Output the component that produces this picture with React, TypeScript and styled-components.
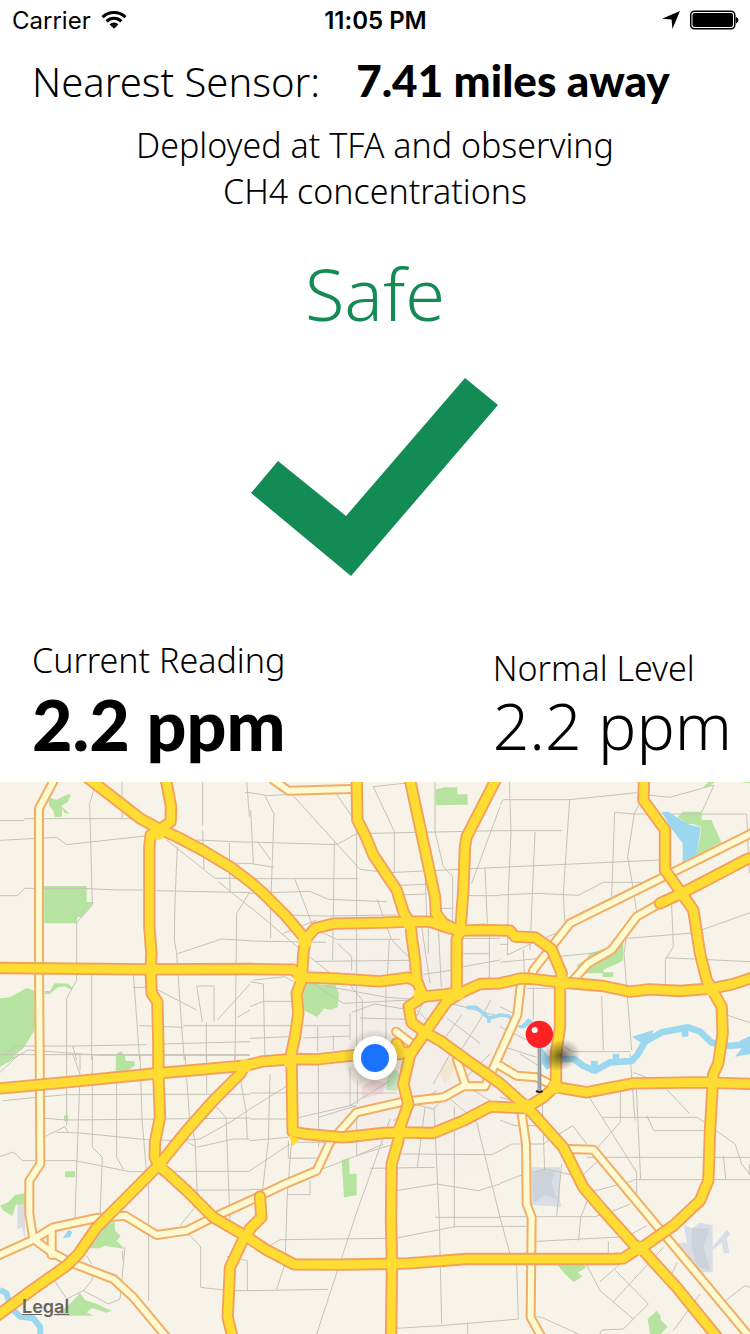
import React from "react";
import styled, { createGlobalStyle } from "styled-components";

const GlobalStyle = createGlobalStyle`
  * { box-sizing: border-box; }
  body { margin: 0; background: #fff; }
`;

const GREEN = "#138b55";

const Screen = styled.main`
  display: flex;
  flex-direction: column;
  min-height: 100vh;
  background: #fff;
  color: #000;
  font-family: "Noto Sans", "Open Sans", sans-serif;
  font-weight: 300;
  font-variant-ligatures: none;
`;

const StatusBar = styled.header`
  display: grid;
  grid-template-columns: 1fr auto 1fr;
  align-items: center;
  height: 40px;
  padding: 0 11px 0 12px;
  font-family: Inter, sans-serif;
  font-size: 24px;
  font-weight: 400;
`;

const StatusGroup = styled.div<{ $end?: boolean }>`
  display: flex;
  align-items: center;
  justify-content: ${(p) => (p.$end ? "flex-end" : "flex-start")};
  gap: 10px;
`;

const Clock = styled.time`
  font-weight: 600;
`;

const SensorRow = styled.div`
  display: flex;
  align-items: baseline;
  gap: 36px;
  padding: 14px 32px 0;
  line-height: 52px;
`;

const SensorLabel = styled.h1`
  margin: 0;
  font-size: 40px;
  font-weight: 300;
`;

const SensorDistance = styled.strong`
  font-family: Lato, sans-serif;
  font-size: 44px;
  font-weight: 900;
`;

const Description = styled.p`
  align-self: center;
  width: 520px;
  max-width: 100%;
  margin: 14px 0 0;
  text-align: center;
  font-size: 34px;
  line-height: 46px;
`;

const Verdict = styled.section`
  display: flex;
  flex-direction: column;
  align-items: center;
  gap: 40px;
  padding-top: 34px;
  color: ${GREEN};
`;

const VerdictText = styled.h2`
  margin: 0;
  font-size: 72px;
  line-height: 90px;
  font-weight: 300;
`;

const Readings = styled.section`
  display: flex;
  justify-content: space-between;
  padding: 62px 18px 0 32px;
`;

const Reading = styled.div<{ $lowered?: boolean }>`
  display: flex;
  flex-direction: column;
  padding-top: ${(p) => (p.$lowered ? "8px" : "0")};
`;

const ReadingLabel = styled.span`
  font-size: 34px;
  line-height: 44px;
`;

const ReadingValue = styled.span<{ $heavy?: boolean }>`
  font-family: ${(p) => (p.$heavy ? "Lato, sans-serif" : "inherit")};
  font-size: ${(p) => (p.$heavy ? "70px" : "64px")};
  line-height: ${(p) => (p.$heavy ? "84px" : "72px")};
  font-weight: ${(p) => (p.$heavy ? 900 : 300)};
`;

const MapPanel = styled.section`
  position: relative;
  margin-top: 16px;
  background: #f7f3e9;
`;

const MapDrawing = styled.svg`
  display: block;
  width: 100%;
  height: auto;
`;

const LegalLink = styled.a`
  position: absolute;
  left: 22px;
  bottom: 16px;
  font-family: Inter, sans-serif;
  font-size: 18px;
  line-height: 22px;
  font-weight: 600;
  color: #66655f;
`;

const highways = [
  "265,-5 330,45 420,115 480,148 530,170 610,212 690,260 750,305 790,340 855,405 917,478",
  "498,0 513,80 512,125 480,148",
  "480,148 452,165 448,200 448,440 454,520 452,570 455,640 472,665 475,790 475,882 480,1012 465,1087 464,1132 475,1157 505,1182 560,1232 640,1312 735,1367 800,1410 882,1453 1020,1454 1150,1452 1225,1450 1400,1437 1500,1437 1840,1437 1870,1435 1920,1402",
  "-10,564 440,568 750,567 880,569 905,592 1000,595 1140,604 1225,593 1250,605",
  "-10,926 60,920 250,902 450,882 735,857 790,844 880,837 950,838 1080,824 1200,822",
  "735,857 720,882 640,962 560,1052 475,1157 380,1252 290,1342 235,1422 200,1457 100,1527 -10,1608",
  "917,478 910,520 905,600 890,640 895,700 885,770 872,830 875,865 878,1055 915,1062 1030,1072 1150,1059 1200,1057 1300,1059 1390,1022 1470,980 1570,984",
  "917,478 945,445 1000,431 1150,428 1220,425 1290,425 1350,445 1380,452 1450,450 1530,452 1545,470 1605,472 1655,508 1685,580 1680,610 1680,740 1668,822 1668,917 1630,952 1590,977",
  "1070,0 1072,120 1095,165 1120,225 1190,330 1212,400 1232,430 1235,470 1245,540 1250,600 1270,650",
  "1230,0 1305,350 1308,400 1330,430 1375,452",
  "1487,0 1400,170 1395,200 1390,330 1382,440 1370,480 1370,640",
  "1270,650 1335,643 1390,635 1440,612 1500,610 1565,595 1600,597 1690,608 1810,618 1890,635 1950,628 2040,633 2140,625 2200,612 2260,592",
  "1380,640 1340,665 1275,758 1230,825 1210,912 1225,972 1200,1042 1195,1082 1175,1152 1173,1322 1176,1450 1173,1680",
  "1270,650 1226,680 1235,728 1275,757 1325,785 1400,840 1500,910 1570,972 1600,1002 1690,1102 1750,1222 1810,1292 1900,1392 1930,1412 2030,1522 2160,1682",
  "1932,0 1930,60 1995,150 1995,270 2045,340 2080,390 2100,520 2120,600 2137,630 2165,680 2168,760 2155,850 2140,882 2130,1052 2125,1202 2100,1262 2020,1337 1930,1400",
  "1980,370 2045,340 2240,238 2260,232",
  "1660,920 1760,937 1900,910 2100,907 2260,912",
  "735,1367 690,1462 683,1612 700,1682",
  "745,1357 750,1346 784,1312 780,1250",
  "1190,790 1205,820 1235,815",
];

const junctions = "475,160 480,1157 455,568 475,882 915,485 900,590 1228,430 1378,452 1375,640 1275,757 1260,645 1200,1055 1176,1452 1690,607 2135,628 1665,920 1580,980 1918,1405 2045,340 2137,907 870,845 735,857";

const arterials = [
  "165,-5 117,85 117,560 119,822 121,1152 88,1202 88,1302 100,1377",
  "-10,1429 100,1379 160,1342 290,1314 375,1307 470,1365 560,1352 640,1312 750,1262 860,1210 950,1172 990,1087 1070,997 1200,967 1330,952 1390,919 1455,919 1500,820 1552,705 1564,600",
  "1595,590 1600,570 1710,430 2260,157",
  "100,1377 155,1417 210,1447 340,1497 400,1552 500,1672",
  "155,1350 155,1425",
  "820,0 865,32 1055,27",
  "1720,600 1765,550 1835,510 1910,410 1980,370",
  "1370,835 1397,917",
  "1188,755 1240,795",
  "1500,857 1550,887 1610,892 1650,912",
  "1565,1000 1578,1092 1580,1272 1595,1312 1592,1612 1625,1672",
  "1706,1107 1780,1109 2250,1672",
];

interface Tile {
  x: number;
  y: number;
  streets: string;
  parks: string;
}

const tiles: Tile[] = [
  {
    x: 0,
    y: 0,
    streets:
      "M0 122H70L75 116H430 M0 181L170 172L200 194L435 168 M285 20L269 70L277 375L230 428V600L200 655V840 M366 0V115 M608 0V137 M608 152L612 268 M750 187L590 180 M500 180L645 295H750 M532 200L525 360L523 480L530 520L545 740L553 840 M530 522L665 477L750 482 M0 347H52L75 325H240L355 330H430 M470 332L750 338 M655 305L750 382 M688 188L690 335 M690 250H750 M750 335L710 400L705 840 M275 580V840 M400 580L419 840 M400 622H440 M470 628L590 690 M607 725L590 618H642V725 M652 720L750 612 M712 712L750 690 M417 737L550 742 M550 737H750 M619 727V840 M0 835L50 798H220L440 794 M490 792L560 790L750 785 M30 840L85 810L300 826H750 M218 797L230 840 M740 0L748 110 M735 38H750",
    parks:
      "M133 318H260V366H282L245 411H232V430H133Z M0 655L30 652L80 624L104 632V750L70 805L25 840H0Z M145 50L168 60L205 42L212 45L204 65L183 78L210 102L193 98L188 85L185 110L165 112L160 93L147 75Z M134 633H150L164 610L205 611L218 624L214 630L194 619L173 622L150 642H134Z M352 820L362 814L374 825V840H348Z",
  },
  {
    x: 750,
    y: 0,
    streets:
      "M0 38L55 47L100 44L310 30 M45 48L72 102L62 380V475 M130 48L330 268L415 278L750 262 M260 43L320 130V840 M370 20L433 155V280 M370 20L480 8 M555 0V155L580 260L608 290V425 M360 160L750 152 M0 186L260 194L318 162 M253 185L248 540 M0 296H325 M0 340L180 334L235 358L410 365 M22 184L62 240 M0 250L72 262 M135 298L188 437 M0 380L165 520L280 610 M85 404L215 408L440 405 M100 460L200 420 M0 483L228 487 M200 450L260 478H450 M0 605L40 612L45 840 M0 680L40 664H130 M10 600L105 590L130 605 M262 490L305 530V570 M197 544L480 541 M382 358L410 440L425 480L480 535 M418 480L412 590 M450 316L525 313 M450 345L530 342 M526 285L530 420 M750 80L665 310 M705 263L712 430 M635 347H750 M572 385H608 M535 440V520 M515 440L540 610 M565 440L574 620 M570 455H610 M640 475H750 M640 521H718 M718 440V600 M520 583L610 570 M640 560L750 540 M188 610L280 670L480 660 M300 615L337 660V840 M225 618L410 652L495 658 M408 612V840 M300 700V780 M305 697L375 672L480 690 M330 714L470 718 M0 737H130 M160 737H300 M0 775L120 770 M160 774L300 768 M203 740V815 M250 766V810 M560 660L640 680L750 710 M592 715L690 790 M635 705L580 780 M500 690L530 720 M520 665L500 710 M722 660L690 720L620 830 M2 90L10 250",
    parks:
      "M557 28L585 22H622V43H653V74L557 76Z M160 612L195 608L215 614L255 612L267 640L263 682L240 690L222 685L202 711L160 690Z",
  },
  {
    x: 1500,
    y: 0,
    streets:
      "M0 75L10 59H210L410 38 M445 45L510 52L642 15L605 97 M28 0L33 155L25 340L22 525 M0 152H185 M105 155L90 510 M209 58L190 340L194 425 M0 262L480 240 M0 345L110 340L235 346L310 307H430 M335 350L344 97L400 102H740L748 280 M425 60L403 100L383 230L402 340L410 400 M22 525L95 490L205 445 M0 493H25 M0 547L290 518 M380 475L605 457 M605 450L750 398 M515 375L520 500L496 540V615 M496 533L750 545 M378 475L372 520L382 650L395 810 M305 648L310 810 M80 625H160 M100 620V720 M70 510L74 600 M0 680L60 710 M0 740L80 780 M680 705L750 728 M180 790L215 815H390 M20 803L110 832",
    parks:
      "M532 112L548 95H605V142L580 132L560 131L548 121Z M606 120H634L664 187L590 226L600 170Z M232 554L258 538L270 520L300 510L370 490V540L355 550L330 560L310 570V577H340V591H308V580H250L243 568H232Z M610 22L625 6H645L625 20Z M720 6H750V10Z",
  },
  {
    x: 0,
    y: 822,
    streets:
      "M0 55L58 0 M10 140L130 128L200 122L440 121H750 M200 0V215 M218 0L240 60L235 200L225 490 M240 0V50 M277 0V280L307 310L300 490 M350 75V310L370 345 M420 0L426 195L440 360 M135 193L200 198L750 192 M137 247L195 218L205 235 M170 235L240 237L440 257L540 260L600 255L690 205L750 165 M0 308L40 294L68 320H225L390 353H440 M510 352H750 M446 380V740 M555 0L568 185L585 260L593 450L540 515L602 578V700L690 710H750 M620 0V120 M640 150L678 190L690 500 M555 260L590 280L700 255L750 255 M560 408L750 408 M704 0V30 M720 70L738 170L742 255 M375 580L360 735L325 750L250 710L200 735L165 682 M250 710L275 680L285 640 M260 605L275 630 M368 590V620 M680 607L742 620V710 M0 2H750",
    parks:
      "M0 0H50L30 22L0 38Z M348 0H372L378 20L404 22V35L375 55H347Z M0 455L25 444L45 423L75 418V452H47L38 485L10 470Z M195 352H225V370H195Z M192 184H205V202H192Z M264 583L285 555L320 505H344L345 530L362 545L350 560L375 585L315 575L300 583Z M160 785L200 758L215 745L240 717L255 738L290 750L335 770L320 776L275 762L260 775L280 785Z",
  },
  {
    x: 750,
    y: 822,
    streets:
      "M0 117H440 M0 165L120 90 M60 60L55 260L35 430 M205 30L206 280 M0 195H115 M140 192L300 155L420 80 M205 190L320 155 M300 40V155 M322 80V150 M300 152L318 160 M0 350L120 270 M0 260L115 250 M115 260V313L205 312 M320 180V305L440 268 M125 260L112 420L105 630L80 705 M112 422H180V380 M205 350L320 305L400 270 M420 195L320 475L200 840 M0 406H40 M0 710L235 706 M60 575L90 557L410 553 M360 343L555 340 M450 300L725 302L750 290 M440 410L560 390L685 410L750 390 M555 490H750 M440 552L615 518H750 M613 160V518 M552 160L568 500L575 810 M440 823L570 815L750 800 M653 805V840 M525 160L502 340 M680 205L750 490 M490 150L550 165L720 0 M590 125L680 205 M640 90L720 140 M550 90L600 0 M430 200L560 110 M140 265H320",
    parks: "M275 318L297 312L299 359H320V424L282 430Z",
  },
  {
    x: 1500,
    y: 822,
    streets:
      "M390 0L405 200 M400 55L480 85L568 178 M0 130L60 145 M126 130L134 350 M0 290L35 270H130L218 215L260 270 M268 130L410 355V420 M308 190H592L705 270L725 330L750 362 M361 110V205L290 283 M408 80L422 375 M440 185L462 230H640 M260 310H750 M670 305L677 375 M400 377H750 M0 388L60 365L140 345L210 362 M250 362L300 315 M185 330L170 485 M0 488H285L330 475L390 450 M0 517H80 M0 490L30 600 M280 412L400 380 M262 440L242 490L236 560 M110 562L380 548L440 515 M325 562V600 M50 635L55 795L0 800 M110 788L125 790L235 840 M260 632L300 710L400 795 M300 683L440 560 M345 648L445 750L370 825L305 828L300 840 M340 743L490 580 M510 670L532 625 M520 830L600 720 M670 745L735 695L750 700 M0 198L45 215H120 M748 330V362 M60 0L115 35",
    parks:
      "M172 633H255L257 642L233 656L248 667L222 684L200 665Z M443 795L470 770L482 785V798L503 818L482 840H450Z",
  },
];

const creek = "M1400 683L1428 682L1450 700L1468 715L1500 705L1525 708L1540 720 M1467 710V728";

const bayou =
  "M1640 838L1700 837L1722 837L1750 858L1785 872L1830 847L1895 843L1912 825L1935 785L1985 757L2065 742L2100 755L2135 788L2190 798L2260 790 M2055 745V770 M1848 822V850 M1783 842V880";

const river = "M0 1530L20 1540L30 1580L60 1610L100 1615L120 1640L122 1680";

function CityMap() {
  return (
    <MapDrawing viewBox="0 6 2250 1656" role="img" aria-label="Map of the nearest sensor">
      <defs>
        <radialGradient id="dotShade">
          <stop offset="0.6" stopColor="#3a3320" stopOpacity="0.28" />
          <stop offset="1" stopColor="#3a3320" stopOpacity="0" />
        </radialGradient>
        <radialGradient id="pinShade">
          <stop offset="0" stopColor="#201c10" stopOpacity="0.65" />
          <stop offset="1" stopColor="#201c10" stopOpacity="0" />
        </radialGradient>
        <radialGradient id="cityShade">
          <stop offset="0.6" stopColor="#f4eee8" />
          <stop offset="1" stopColor="#f4eee8" stopOpacity="0" />
        </radialGradient>
      </defs>
      <rect y="6" width="2250" height="1656" fill="#f7f3e9" />
      <circle cx="1230" cy="800" r="430" fill="url(#cityShade)" />

      <g fill="#d9dee5">
        <path d="M1594 1162H1680V1262L1685 1280L1594 1275Z M2052 1335L2075 1345L2100 1328L2138 1335V1400L2180 1350L2192 1362L2180 1375L2188 1420H2172L2165 1388L2138 1410V1477H2105V1495L2085 1478L2070 1440L2032 1420V1388H2060Z M52 1275H75V1378L65 1340L52 1350Z" />
        <path fill="#cdd3db" d="M1596 1185L1625 1170L1665 1175L1655 1210L1672 1260L1635 1245L1600 1270Z M2075 1345H2130L2110 1400L2130 1470L2090 1460L2075 1400Z" />
      </g>
      <path fill="#f3d9da" d="M1085 922L1115 900L1158 908L1148 940L1085 958Z" />
      <path fill="#c3e3bc" d="M1160 905L1170 870H1190L1200 890L1190 932L1158 930Z" />
      <path fill="#f2e6d0" d="M1320 880L1340 832L1365 850L1355 885L1335 912Z" />

      {tiles.map((tile) => (
        <g key={`${tile.x}-${tile.y}`} transform={`translate(${tile.x} ${tile.y})`}>
          <path d={tile.parks} fill="#b7e3a1" />
          <path d={tile.streets} fill="none" stroke="#c5c2b8" strokeWidth="3" />
        </g>
      ))}

      <path
        fill="#9bd7ef"
        d="M1985 95L2005 95L2040 118L2070 135L2102 142L2090 226L2048 245V190L2010 140Z M1896 770L1935 758L1960 750L1955 775L1925 790Z M2220 782L2250 768V822L2205 830L2225 805Z M1550 735L1565 735L1585 715L1600 725L1575 745L1560 745Z M188 1375L205 1350L217 1355L210 1372Z M1625 800L1645 830L1655 860L1640 870L1625 850Z"
      />
      <path d={bayou} fill="none" stroke="#9bd7ef" strokeWidth="20" strokeLinejoin="round" />
      <path d={creek} fill="none" stroke="#9bd7ef" strokeWidth="11" strokeLinejoin="round" />
      <path d={river} fill="none" stroke="#9bd7ef" strokeWidth="18" strokeLinejoin="round" />

      <g fill="none" strokeLinejoin="round" strokeLinecap="round">
        {arterials.map((points) => (
          <polyline key={points} points={points} stroke="#f1ae66" strokeWidth="30" />
        ))}
        {arterials.map((points) => (
          <polyline key={points} points={points} stroke="#fdfad2" strokeWidth="18" />
        ))}
        {highways.map((points) => (
          <polyline key={points} points={points} stroke="#f2a05c" strokeWidth="37" />
        ))}
        {highways.map((points) => (
          <polyline key={points} points={points} stroke="#ffdc32" strokeWidth="26" />
        ))}
      </g>
      <g fill="#ffdc32">
        {junctions.split(" ").map((pair) => {
          const [cx, cy] = pair.split(",");
          return <circle key={pair} cx={cx} cy={cy} r="20" />;
        })}
        <path d="M866 1065L900 1078L878 1098Z" />
      </g>

      <circle cx="1125" cy="842" r="96" fill="url(#dotShade)" />
      <circle cx="1125" cy="834" r="66" fill="#fff" />
      <circle cx="1125" cy="834" r="42" fill="#1a73ff" />

      <ellipse cx="1682" cy="826" rx="60" ry="46" fill="url(#pinShade)" transform="rotate(-20 1682 826)" />
      <ellipse cx="1618" cy="934" rx="11" ry="5" fill="#222" />
      <rect x="1613" y="795" width="11" height="138" fill="#8d9399" />
      <rect x="1616" y="795" width="3" height="138" fill="#b9bec3" />
      <circle cx="1618" cy="763" r="41" fill="#ff2024" />
      <circle cx="1604" cy="750" r="9" fill="#fff" />
    </MapDrawing>
  );
}

export default function App() {
  return (
    <Screen>
      <GlobalStyle />
      <StatusBar>
        <StatusGroup>
          <span>Carrier</span>
          <svg width="26" height="20" viewBox="0 0 26 20" aria-label="Wi-Fi">
            <g fill="none" stroke="#000" strokeWidth="3">
              <path d="M1.5 7.2A16.5 16.5 0 0 1 24.5 7.2" />
              <path d="M5.6 11.4A10.5 10.5 0 0 1 20.4 11.4" />
            </g>
            <path d="M8.6 14.4A6.3 6.3 0 0 1 17.4 14.4L13 18.8Z" />
          </svg>
        </StatusGroup>
        <Clock>11:05 PM</Clock>
        <StatusGroup $end>
          <svg width="18" height="18" viewBox="0 0 18 18" aria-label="Location in use">
            <path d="M18 0L10.4 18L9.6 8.6L0 7.8Z" />
          </svg>
          <svg width="49" height="20" viewBox="0 0 49 20" aria-label="Battery full">
            <rect x="0.75" y="1.25" width="44" height="17.5" rx="3.5" fill="none" stroke="#000" strokeWidth="1.5" />
            <rect x="2.5" y="3" width="40.5" height="14" rx="2" />
            <path d="M46.2 7.5A3 3 0 0 1 46.2 13Z" stroke="#000" />
          </svg>
        </StatusGroup>
      </StatusBar>

      <SensorRow>
        <SensorLabel>Nearest Sensor:</SensorLabel>
        <SensorDistance>7.41 miles away</SensorDistance>
      </SensorRow>
      <Description>Deployed at TFA and observing CH4 concentrations</Description>

      <Verdict>
        <VerdictText>Safe</VerdictText>
        <svg width="248" height="198" viewBox="251 378 248 198" aria-hidden="true">
          <path d="M251 493L278 461L346 516L465 378L498 405L351 576Z" fill={GREEN} />
        </svg>
      </Verdict>

      <Readings>
        <Reading>
          <ReadingLabel>Current Reading</ReadingLabel>
          <ReadingValue $heavy>2.2 ppm</ReadingValue>
        </Reading>
        <Reading $lowered>
          <ReadingLabel>Normal Level</ReadingLabel>
          <ReadingValue>2.2 ppm</ReadingValue>
        </Reading>
      </Readings>

      <MapPanel>
        <CityMap />
        <LegalLink href="#legal">Legal</LegalLink>
      </MapPanel>
    </Screen>
  );
}
